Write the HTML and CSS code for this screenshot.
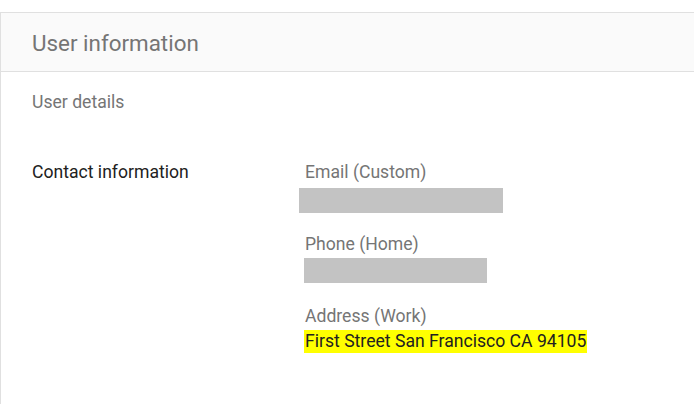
FILE: index.html
```html
<!DOCTYPE html>
<html>
<head>
<meta charset="utf-8">
<link rel="stylesheet" href="styles.css">
</head>
<body>
<div class="card">
  <div class="card-header">User information</div>
  <div class="card-body">
    <div class="section-title">User details</div>
    <div class="row">
      <div class="row-label">Contact information</div>
      <div class="row-values">
        <div class="field">
          <div class="field-label">Email (Custom)</div>
          <div class="redacted redacted-email"></div>
        </div>
        <div class="field field-phone">
          <div class="field-label">Phone (Home)</div>
          <div class="redacted redacted-phone"></div>
        </div>
        <div class="field field-address">
          <div class="field-label">Address (Work)</div>
          <div class="field-value"><span class="highlight">First Street San Francisco CA 94105</span></div>
        </div>
      </div>
    </div>
  </div>
</div>
</body>
</html>
```

FILE: styles.css
```css
html, body {
  margin: 0;
  padding: 0;
  background: #ffffff;
  font-family: Roboto, "Liberation Sans", Arial, sans-serif;
}
body {
  padding-top: 12px;
  height: 392px;
  overflow: hidden;
}
.card {
  border: 1px solid #e0e0e0;
  border-right: none;
  border-bottom: none;
  margin-right: -20px;
  height: 391px;
}
.card-header {
  background: #fafafa;
  border-bottom: 1px solid #e0e0e0;
  height: 58px;
  line-height: 60px;
  padding-left: 31px;
  font-size: 22.4px;
  color: #757575;
}
.card-body {
  padding-left: 31px;
}
.section-title {
  font-size: 17.6px;
  color: #757575;
  line-height: 20px;
  padding-top: 20px;
  padding-bottom: 2px;
}
.row {
  display: flex;
  margin-top: 46px;
}
.row-label {
  width: 273px;
  font-size: 17.6px;
  color: #212121;
  line-height: 20px;
  padding-top: 2px;
}
.row-values {
  display: flex;
  flex-direction: column;
}
.field-label {
  font-size: 17.6px;
  color: #757575;
  line-height: 20px;
  padding-top: 2px;
}
.field-phone {
  margin-top: 19px;
}
.field-address {
  margin-top: 21px;
}
.redacted {
  background: #c3c3c3;
  height: 25px;
  margin-top: 6px;
}
.redacted-email {
  width: 204px;
  margin-left: -6px;
}
.redacted-phone {
  width: 183px;
  margin-left: -1px;
  margin-top: 4px;
}
.field-value {
  font-size: 17.6px;
  color: #212121;
  margin-top: 4px;
  line-height: 23px;
}
.highlight {
  display: inline-block;
  background: #ffff00;
  line-height: 23px;
  padding: 0 1px 0 1px;
  margin-left: -1px;
}
```
